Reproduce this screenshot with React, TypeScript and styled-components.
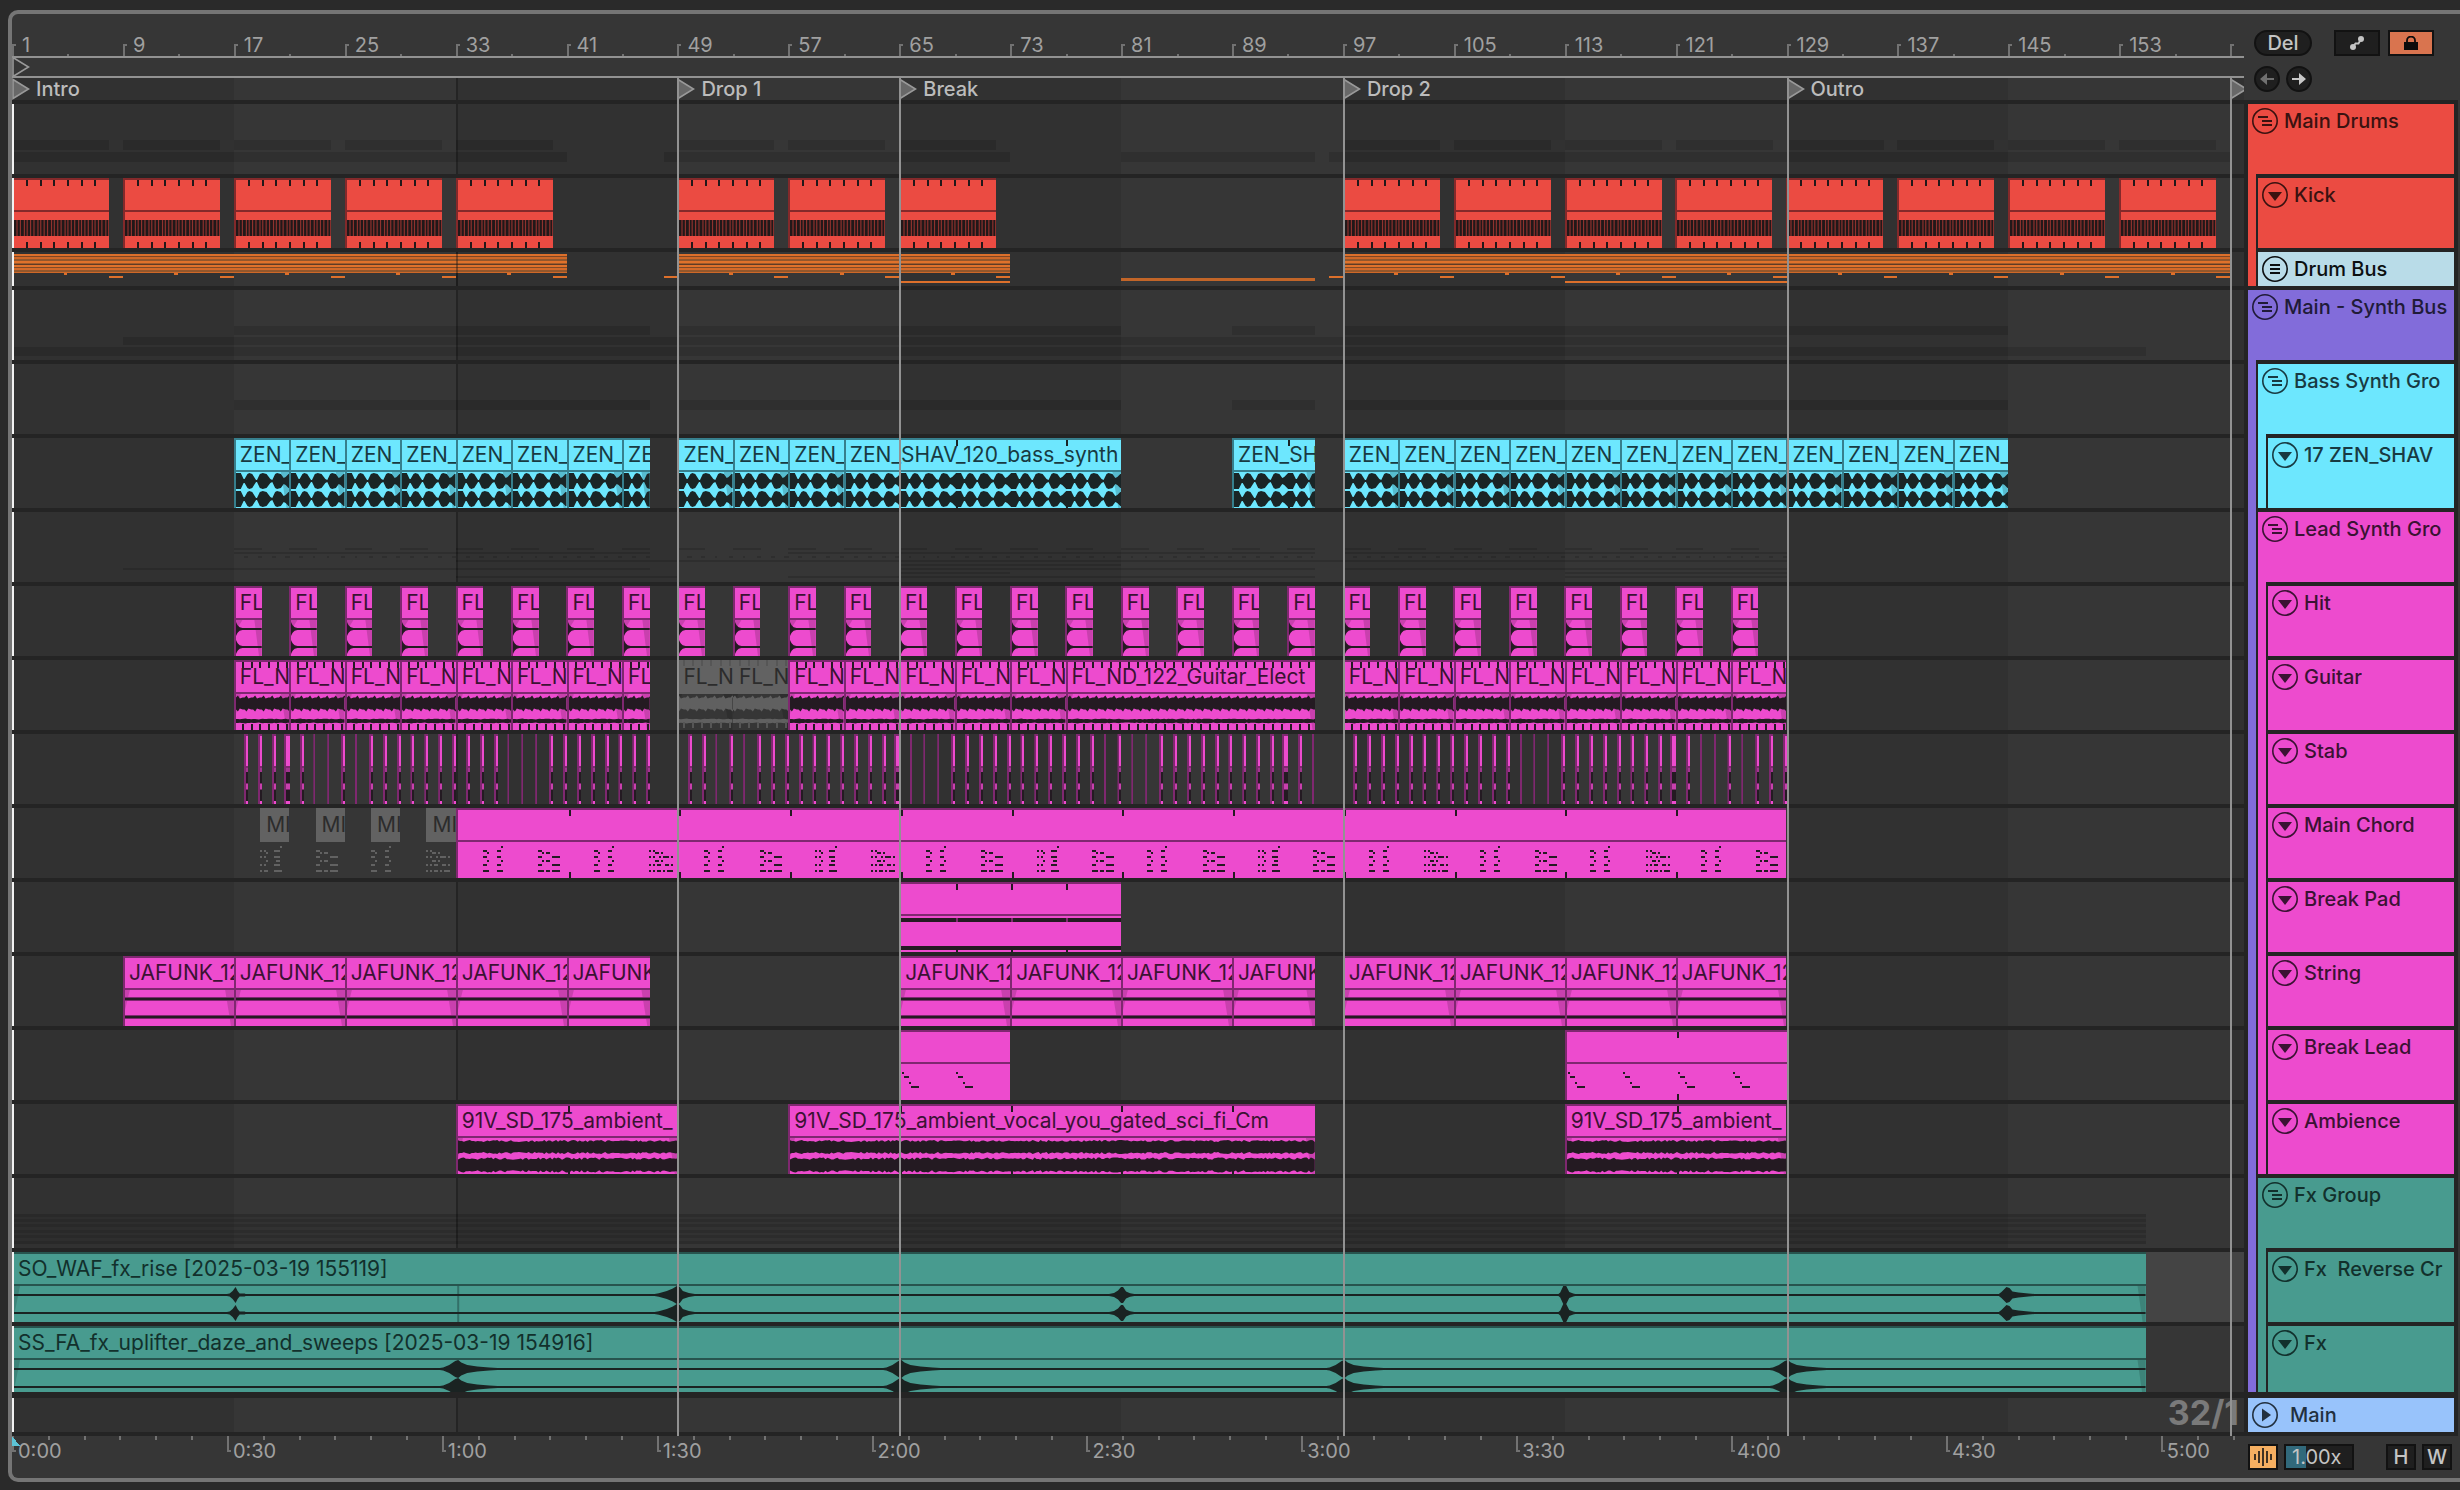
import React from "react";
import styled, { createGlobalStyle } from "styled-components";

const BARS = 161;
const pct = (bars: number) => `${(bars / BARS) * 100}%`;
const at = (bar: number) => pct(bar - 1);

type Tone = { fill: string; edge: string; ink: string; wave: string; fade: string };

const tones: Record<string, Tone> = {
  red: { fill: "#eb4b42", edge: "#84292a", ink: "#3a1210", wave: "#211819", fade: "#c83f38" },
  cyan: { fill: "#6de7fe", edge: "#367f8d", ink: "#183a42", wave: "#1a2526", fade: "#57bccf" },
  magenta: { fill: "#ed4bce", edge: "#7f2870", ink: "#3b1233", wave: "#241a22", fade: "#c940ae" },
  teal: { fill: "#489b8f", edge: "#27544e", ink: "#12302c", wave: "#1a2322", fade: "#3d8379" },
  purple: { fill: "#826cda", edge: "#463b76", ink: "#201b38", wave: "#211d30", fade: "#6c5ab4" },
  ice: { fill: "#b9dce8", edge: "#66797f", ink: "#0c0f10", wave: "#1f2526", fade: "#9bb9c3" },
  blue: { fill: "#98c3fb", edge: "#546b8a", ink: "#22303f", wave: "#1f2530", fade: "#7fa3d2" },
  muted: { fill: "#626262", edge: "#626262", ink: "#2c2c2c", wave: "#606060", fade: "#2e2e2e" },
};

/* ------------------------------ page frame ------------------------------ */

const Global = createGlobalStyle`
  *, *::before, *::after { box-sizing: border-box; }
  body { margin: 0; background: #2a2a2a; font-family: Inter, "Liberation Sans", sans-serif; font-size: 20px; line-height: 24px; }
  button, input { font: inherit; color: inherit; margin: 0; padding: 0; }
  svg { display: block; }
`;

const Page = styled.main`
  padding: 10px 0 8px 8px;
  overflow: hidden;
`;

const Panel = styled.div`
  display: grid;
  grid-template-columns: minmax(0, 1fr) 216px;
  background: #363636;
  border: 4px solid #757575;
  border-right: 0;
  border-radius: 10px 0 0 10px;
  overflow: hidden;
`;

const Arrangement = styled.section`
  min-width: 0;
`;

/* -------------------------------- rulers -------------------------------- */

const BarRuler = styled.div`
  display: flex;
  height: 44px;
  overflow: hidden;
  border-bottom: 2px solid #929292;
  color: #a0a0a0;
`;

const BarCell = styled.div`
  position: relative;
  flex: 0 0 ${pct(8)};
  padding: 19px 0 0 10px;
  &::before {
    content: "";
    position: absolute;
    left: 0;
    bottom: 0;
    width: 4px;
    height: 12px;
    border-left: 2px solid #727272;
    border-top: 2px solid #727272;
  }
  &::after {
    content: "";
    position: absolute;
    left: 50%;
    bottom: 0;
    width: 2px;
    height: 2px;
    background: #727272;
  }
`;

const LoopStrip = styled.div`
  height: 20px;
  border-bottom: 2px solid #929292;
`;

const LocatorStrip = styled.div`
  display: flex;
  height: 22px;
  overflow: hidden;
`;

const Locator = styled.div<{ $bars: number }>`
  display: flex;
  flex: 0 0 ${(p) => pct(p.$bars)};
  gap: 6px;
  align-items: center;
  line-height: 22px;
  font-weight: 500;
  color: #bcbcbc;
  svg { flex: none; }
`;

const TimeRuler = styled.div`
  display: flex;
  height: 42px;
  overflow: hidden;
  color: #a0a0a0;
`;

const TimeCell = styled.div`
  position: relative;
  flex: 0 0 ${pct(15.5)};
  padding: 3px 0 0 6px;
  svg { position: absolute; inset: 0; width: 100%; height: 20px; }
`;

/* --------------------------------- lanes -------------------------------- */

const Lanes = styled.div`
  position: relative;
  background: repeating-linear-gradient(90deg, #313131 0 ${pct(16)}, #363636 ${pct(16)} ${pct(32)});
  border-bottom: 4px solid #242424;
`;

const Lane = styled.div<{ $h?: number; $gap?: number; $selected?: boolean }>`
  position: relative;
  display: flex;
  height: ${(p) => (p.$h ?? 70) + (p.$gap ?? 4)}px;
  border-top: ${(p) => p.$gap ?? 4}px solid #242424;
  background: ${(p) => (p.$selected ? "#444444" : "transparent")};
  overflow: hidden;
  &::after {
    content: "";
    position: absolute;
    left: 0;
    top: 0;
    bottom: 0;
    width: 2px;
    background: #f2f2f2;
  }
`;

const LaneDrawing = styled.svg`
  width: 100%;
  height: 100%;
`;

const Readout = styled.output`
  margin-left: auto;
  padding-right: 5px;
  font-size: 34px;
  font-weight: 700;
  line-height: 30px;
  color: #7a7a7a;
`;

const GuideLine = styled.i<{ $dark?: boolean }>`
  position: absolute;
  top: 0;
  bottom: ${(p) => (p.$dark ? "0" : "-4px")};
  width: 2px;
  background: ${(p) => (p.$dark ? "#242424" : "#929292")};
`;

const ClipBox = styled.article<{ $tone: Tone; $muted?: boolean }>`
  position: relative;
  flex: none;
  height: 70px;
  overflow: hidden;
  border: 0 solid ${(p) => p.$tone.edge};
  border-width: ${(p) => (p.$muted ? "0" : "2px 0 0 2px")};
  background: ${(p) => (p.$muted ? "#363636" : p.$tone.fill)};
`;

const ClipTitle = styled.h3<{ $tone: Tone; $muted?: boolean }>`
  height: ${(p) => (p.$muted ? 34 : 32)}px;
  margin: 0;
  padding-left: ${(p) => (p.$muted ? 6 : 4)}px;
  overflow: hidden;
  border-bottom: 2px solid ${(p) => p.$tone.edge};
  background: ${(p) => p.$tone.fill};
  color: ${(p) => p.$tone.ink};
  font-size: 21px;
  font-weight: 400;
  line-height: ${(p) => (p.$muted ? 34 : 30)}px;
  white-space: nowrap;
`;

const ClipWave = styled.svg`
  width: 100%;
  height: 36px;
`;

const ClipTicks = styled.svg`
  position: absolute;
  inset: 0;
  width: 100%;
  height: 100%;
`;

/* ------------------------------ wave shapes ----------------------------- */

const noise = (n: number) => {
  const v = Math.sin(n * 12.9898) * 43758.5453;
  return v - Math.floor(v);
};

/* A closed shape that is mirrored around the line y = centre. */
const mirrored = (points: number[][], centre: number) => {
  const up = points.map(([x, h]) => `${x.toFixed(1)} ${(centre - h).toFixed(1)}`);
  const down = [...points].reverse().map(([x, h]) => `${x.toFixed(1)} ${(centre + h).toFixed(1)}`);
  return `M${up.join("L")}L${down.join("L")}Z`;
};

const bassEnvelope = (w: number) => {
  const shape = [[0, 8], [5, 8], [8, 2], [9, 2], [12, 7], [14, 8], [17, 7], [21, 1], [22, 1], [25, 7], [28, 8], [32, 7], [36, 2], [38, 1], [41, 7], [43, 8], [47, 7], [50, 3], [52, 4], [55, 7]];
  const out: number[][] = [];
  for (let base = 0; base < w; base += 56) shape.forEach(([x, h]) => base + x <= w && out.push([base + x, h]));
  out.push([w, 7]);
  return out;
};

const roughEnvelope = (w: number, h: number, jitter: number, seed: number) => {
  const out: number[][] = [];
  for (let x = 0; x <= w; x += 2) out.push([x, h + (noise(x + seed) - 0.4) * jitter]);
  out.push([w, h]);
  return out;
};

const toothedEnvelope = (w: number, h: number) => {
  const out: number[][] = [];
  for (let x = 0; x < w; x += 9) out.push([x, h], [x + 2, h + 2], [x + 4, h - 1], [x + 7, h]);
  out.push([w, h]);
  return out;
};

type Kind = "kick" | "bass" | "hit" | "guitar" | "pad" | "string" | "ambience" | "chord" | "lead";

type Cell = [number, number, number];
const chordShapes: Record<string, Cell[]> = {
  A: [[18, 4, 2], [0, 8, 4], [14, 8, 4], [4, 10, 2], [0, 14, 4], [14, 14, 4], [4, 18, 2], [18, 18, 2], [0, 22, 4], [14, 22, 4], [0, 28, 6], [14, 28, 6]],
  a: [[20, 4, 2], [0, 8, 2], [4, 8, 2], [14, 8, 6], [6, 10, 2], [0, 14, 2], [4, 14, 2], [14, 14, 6], [6, 18, 2], [16, 18, 4], [0, 22, 2], [4, 22, 2], [14, 22, 6], [0, 28, 2], [4, 28, 4], [14, 28, 8]],
  B: [[0, 8, 4], [4, 10, 2], [8, 10, 4], [0, 14, 4], [14, 14, 8], [4, 18, 2], [8, 18, 4], [0, 22, 4], [14, 22, 8], [0, 28, 6], [8, 28, 4], [14, 28, 8]],
  b: [[0, 8, 2], [4, 8, 2], [6, 10, 4], [12, 10, 2], [0, 14, 2], [4, 14, 2], [10, 14, 2], [14, 14, 6], [22, 14, 2], [6, 18, 4], [12, 18, 2], [0, 22, 2], [4, 22, 2], [8, 22, 4], [16, 22, 4], [22, 22, 2], [0, 28, 2], [4, 28, 2], [8, 28, 4], [14, 28, 2], [18, 28, 6]],
};

const Chord = ({ shape, x, fill }: { shape: string; x: string; fill: string }) => (
  <svg x={x} y="0" width="30" height="36" overflow="visible">
    {chordShapes[shape].map(([cx, cy, cw], i) => (
      <rect key={i} x={cx} y={cy} width={cw} height="2" fill={fill} shapeRendering="crispEdges" />
    ))}
  </svg>
);

const Fades = ({ w, fade, left = true }: { w: number; fade: string; left?: boolean }) => (
  <g fill={fade}>
    {left && <path d="M0 0H5L0 20Z" />}
    <path d={`M${w - 9} 0H${w}V36H${w - 3}Z`} />
  </g>
);

const Wave = ({ kind, len, tone, notes }: { kind: Kind; len: number; tone: Tone; notes?: string }) => {
  const w = len * 14;
  const box = { viewBox: `0 0 ${w} 36`, preserveAspectRatio: "none" as const };
  const muted = tone === tones.muted;
  if (kind === "kick")
    return (
      <ClipWave {...box}>
        <rect y="8" width={w} height="16" fill={tone.wave} />
        {Array.from({ length: len * 4 }, (_, i) => (
          <rect key={i} x={i * 3.5 + 2.5 + (i % 4 === 2 ? 0.6 : 0)} y="8" width="1.2" height="16" fill="#8f322e" />
        ))}
      </ClipWave>
    );
  if (kind === "bass")
    return (
      <ClipWave {...box}>
        <Fades w={w} fade={tone.fade} left={false} />
        <g fill={tone.wave}>
          <path d={mirrored(bassEnvelope(w), 9)} />
          <path d={mirrored(bassEnvelope(w), 27)} />
        </g>
      </ClipWave>
    );
  if (kind === "hit")
    return (
      <ClipWave {...box}>
        <path d="M0 0H7L3 6L0 14ZM20 0H28V36H25Z" fill={tone.fade} />
        <g fill={tone.wave}>
          {[9, 27].map((c) => (
            <path key={c} d={mirrored([[0, 7], [1, 5], [2, 3.5], [4, 1.8], [7, 1], [28, 1]], c)} />
          ))}
        </g>
      </ClipWave>
    );
  if (kind === "guitar")
    return (
      <ClipWave {...box}>
        <Fades w={w} fade={tone.fade} />
        <g fill={tone.wave}>
          <path d={mirrored(toothedEnvelope(w, 6), 9.5)} />
          <path d={mirrored(roughEnvelope(w, 1.9, 0.8, 3), 27)} />
        </g>
      </ClipWave>
    );
  if (kind === "pad")
    return (
      <ClipWave {...box} shapeRendering="crispEdges">
        <rect y="2" width={w} height="4" fill={tone.wave} />
        <rect y="30" width={w} height="4" fill={tone.wave} />
        {[4, 8, 12].map((b) => (
          <rect key={b} x={b * 14} y="2" width="2" height="4" fill={tone.edge} />
        ))}
      </ClipWave>
    );
  if (kind === "string")
    return (
      <ClipWave {...box}>
        <Fades w={w} fade={tone.fade} />
        <g fill={tone.edge}>
          <rect y="7" width={w} height="4" />
          <rect y="25" width={w} height="4" />
        </g>
        <g fill={tone.wave}>
          <rect y="8" width={w} height="2" />
          <rect y="26" width={w} height="2" />
        </g>
      </ClipWave>
    );
  if (kind === "ambience")
    return (
      <ClipWave {...box}>
        <Fades w={w} fade={tone.fade} />
        <g fill={tone.wave}>
          <path d={mirrored(roughEnvelope(w, 5.8, 2, 1), 9)} />
          <path d={mirrored(roughEnvelope(w, 6.2, 2.4, 7), 27)} />
        </g>
      </ClipWave>
    );
  if (kind === "chord")
    return (
      <ClipWave>
        {[...(notes ?? "")].map((shape, i) => (
          <Chord key={i} shape={shape} x={muted ? "0" : `${((1.8 + i * 4) / len) * 100}%`} fill={muted ? "#626262" : tone.wave} />
        ))}
      </ClipWave>
    );
  if (kind === "lead")
    return (
      <ClipWave shapeRendering="crispEdges">
        {Array.from({ length: len / 4 }, (_, i) => (
          <svg key={i} x={`${((i * 4) / len) * 100}%`} width="20" height="36">
            <path d="M1 8h2v2h-2zM3 12h5v2h-5zM8 18h2v2h-2zM10 22h8v2h-8z" fill={tone.wave} />
          </svg>
        ))}
      </ClipWave>
    );
  return null;
};

/* --------------------------------- clips -------------------------------- */

type ClipData = { start: number; len: number; name?: string; muted?: boolean; notes?: string; ticks?: number[] };

const Clip = ({ data, from, kind, tone: base }: { data: ClipData; from: number; kind: Kind; tone: Tone }) => {
  const tone = data.muted ? tones.muted : base;
  const marks = data.ticks ?? [];
  return (
    <ClipBox $tone={tone} $muted={data.muted} style={{ marginLeft: pct(data.start - from), width: pct(data.len) }}>
      <ClipTitle $tone={tone} $muted={data.muted}>{data.name}</ClipTitle>
      <Wave kind={kind} len={data.len} tone={tone} notes={data.notes} />
      {marks.length > 0 && (
        <ClipTicks shapeRendering="crispEdges" fill={data.muted ? "#565656" : tone.wave}>
          {marks.map((m) => (
            <React.Fragment key={m}>
              <rect x={`${(m / data.len) * 100}%`} y="0" width="2" height="6" />
              <rect x={`${(m / data.len) * 100}%`} y="62" width="2" height="6" />
            </React.Fragment>
          ))}
        </ClipTicks>
      )}
    </ClipBox>
  );
};

const ClipLane = ({ clips, kind, tone }: { clips: ClipData[]; kind: Kind; tone: Tone }) => {
  let cursor = 1;
  return (
    <Lane>
      {clips.map((c) => {
        const from = cursor;
        cursor = c.start + c.len;
        return <Clip key={c.start} data={c} from={from} kind={kind} tone={tone} />;
      })}
    </Lane>
  );
};

const series = (first: number, last: number, step: number, len: number, extra: Partial<ClipData> = {}): ClipData[] => {
  const out: ClipData[] = [];
  for (let b = first; b <= last; b += step) out.push({ start: b, len, ...extra });
  return out;
};

const every = (step: number, len: number, offset = step) => {
  const out: number[] = [];
  for (let b = offset; b < len - 0.1; b += step) out.push(b);
  return out;
};

const beatTicks = (clips: ClipData[]) => clips.map((c) => ({ ...c, ticks: every(0.654, c.len, 0.45) }));

const kickClips = [...series(1, 33, 8, 7), ...series(49, 65, 8, 7), ...series(97, 153, 8, 7)].map((c) => ({ ...c, ticks: [1, 2, 3, 4, 5, 6].map((t) => t - 0.1) }));

const zen = { name: "ZEN_" };
const bassClips: ClipData[] = [
  ...series(17, 41, 4, 4, zen),
  { start: 45, len: 2, name: "ZE" },
  ...series(49, 57, 4, 4, zen),
  { start: 61, len: 20, ticks: [8, 16], name: "ZEN_SHAV_120_bass_synth" },
  { start: 89, len: 6, ticks: [4], name: "ZEN_SH" },
  ...series(97, 141, 4, 4, zen),
];

const hit = { name: "FL" };
const hitClips = [...series(17, 45, 4, 2, hit), ...series(49, 93, 4, 2, hit), ...series(97, 125, 4, 2, hit)];

const fl = { name: "FL_N" };
const guitarClips = beatTicks([
  ...series(17, 41, 4, 4, fl),
  { start: 45, len: 2, name: "FL" },
  ...series(49, 53, 4, 4, { ...fl, muted: true }),
  ...series(57, 73, 4, 4, fl),
  { start: 77, len: 18, name: "FL_ND_122_Guitar_Elect" },
  ...series(97, 125, 4, 4, fl),
]);

const chordClips: ClipData[] = [
  ...["a", "B", "A", "b"].map((notes, i) => ({ start: 18.9 + i * 4, len: 2.1, name: "MI", muted: true, notes })),
  { start: 33, len: 96, notes: "ABAbABabABaBABaBAbABAbAB", ticks: every(8, 96) },
];

const padClips: ClipData[] = [{ start: 65, len: 16, ticks: [4, 8, 12] }];

const jf = { name: "JAFUNK_12" };
const jfShort = { name: "JAFUNK" };
const stringClips = [
  ...series(9, 33, 8, 8, jf),
  { start: 41, len: 6, ...jfShort },
  ...series(65, 81, 8, 8, jf),
  { start: 89, len: 6, ...jfShort },
  ...series(97, 121, 8, 8, jf),
];

const leadClips: ClipData[] = [{ start: 65, len: 8 }, { start: 113, len: 16, ticks: [8] }];

const ambienceClips: ClipData[] = [
  { start: 33, len: 16, ticks: [8], name: "91V_SD_175_ambient_" },
  { start: 57, len: 38, ticks: [8, 16, 24, 32], name: "91V_SD_175_ambient_vocal_you_gated_sci_fi_Cm" },
  { start: 113, len: 16, ticks: [8], name: "91V_SD_175_ambient_" },
];

/* ------------------------- drawings inside lanes ------------------------ */

const Span = ({ from, to, y, h, fill = "rgba(0,0,0,0.13)" }: { from: number; to: number; y: number; h: number; fill?: string }) => (
  <rect x={at(from)} y={y} width={pct(to - from)} height={h} fill={fill} shapeRendering="crispEdges" />
);

type Spans = [number, number][];
const Spread = ({ spans, y, h, fill }: { spans: Spans; y: number; h: number; fill?: string }) => (
  <>{spans.map(([a, b]) => <Span key={a} from={a} to={b} y={y} h={h} fill={fill} />)}</>
);

const kickSpans: Spans = kickClips.map((c) => [c.start, c.start + 7]);
const bassSpans: Spans = [[17, 47], [49, 81], [89, 95], [97, 145]];
const thin = "rgba(0,0,0,0.14)";

const DrumNotes = () => {
  const rows: [number, number, string][] = [
    [2, 2, "#dd702b"], [4, 1, "#7d4625"], [5, 2, "#cf6827"], [7, 2, "#93572c"], [9, 2, "#e0722b"], [11, 1, "#a05a2a"],
    [12, 1, "#5f3b25"], [13, 2, "#e0722b"], [15, 1, "#804a26"], [16, 2, "#d46a29"], [18, 2, "#93572c"], [20, 1, "#cf6827"],
  ];
  const dashes = [8, 16, 24, 32, 40, 48, 56, 64, 72, 96, 104, 112, 120, 128, 136, 144, 152, 160];
  const dots = [4, 12, 20, 28, 36, 52, 60, 68, 100, 108, 116, 124, 132, 140, 148, 156];
  const orange = "#dd702b";
  return (
    <LaneDrawing>
      {rows.map(([y, h, c]) => <Spread key={y} spans={[[1, 41], [49, 73], [97, 161]]} y={y} h={h} fill={c} />)}
      {dots.map((d) => <Span key={d} from={d + 0.72} to={d + 1} y={21} h={2} fill={orange} />)}
      {dashes.map((d) => <Span key={d} from={d} to={d + 1} y={24} h={2} fill={orange} />)}
      <Span from={81} to={95} y={26} h={3} fill="#c26528" />
      <Spread spans={[[65, 73], [113, 129]]} y={29} h={2} fill={orange} />
      <rect x={at(33)} width="2" height="34" fill="#141414" opacity="0.4" shapeRendering="crispEdges" />
    </LaneDrawing>
  );
};

/* n = short stab, w = wide stab, t = trimmed to its edge */
const stabRuns: [number, string][] = [
  [17, "nnnwnttntnnnnnnnnnntttnnnnnnnn"],
  [49, "nntntnnnnnnnnnnwtttnnnnnnnnnnntnttnnnnnnnnnwnt"],
  [97, "nnnnnnnnnnnntttnnnnnnnnwnttntnnn"],
];

const StabNotes = () => {
  const m = tones.magenta;
  return (
    <LaneDrawing shapeRendering="crispEdges">
      {stabRuns.flatMap(([start, run]) =>
        [...run].map((k, i) => {
          const bar = start + i + (k === "w" ? 0.6 : 0.74);
          const body = k === "w" ? 4 : 2;
          return (
            <svg key={`${start}-${i}`} x={at(bar)} width="8" height="70">
              <rect width="2" height="70" fill={m.edge} />
              {k !== "t" && (
                <>
                  <rect x="2" width={body} height="70" fill={m.edge} />
                  <rect x="2" y="2" width={body} height="30" fill={m.fill} />
                  <rect x="2" y="34" width={body} height="4" fill="#a23590" />
                  <rect x="2" y="38" width={body} height="11" fill={m.wave} />
                  <rect x="2" y="50" width={body} height="5" fill={m.fade} />
                  <rect x="2" y="56" width={body} height="11" fill={m.wave} />
                  <rect x="2" y="67" width={body} height="3" fill={m.fill} />
                </>
              )}
            </svg>
          );
        }),
      )}
    </LaneDrawing>
  );
};

const LeadOverview = () => (
  <LaneDrawing>
    <Spread spans={hitClips.map((c) => [c.start, c.start + 2])} y={36} h={2} fill={thin} />
    <Spread spans={[[17, 47], [57, 95], [97, 129]]} y={40} h={2} fill={thin} />
    {stabRuns.flatMap(([s, run]) => [...run].map((k, i) => <Span key={`${s}${i}`} from={s + i + 0.72} to={s + i + (k === "t" ? 0.86 : 1.02)} y={44} h={2} fill={thin} />))}
    <Span from={33} to={129} y={48} h={2} fill={thin} />
    <Span from={65} to={81} y={52} h={2} fill={thin} />
    <Spread spans={[[9, 47], [65, 95], [97, 129]]} y={56} h={2} fill={thin} />
    <Spread spans={[[65, 73], [113, 129]]} y={60} h={2} fill={thin} />
    <Spread spans={[[33, 49], [57, 95], [113, 129]]} y={64} h={2} fill={thin} />
  </LaneDrawing>
);

type Swell = { bar: number; points: number[][] };
const crashSwells: Swell[] = [
  { bar: 17, points: [[-14, 0], [-6, 1.5], [-3, 4], [0, 8], [2, 4], [4, 1.5], [9, 1.5], [12, 0]] },
  { bar: 49, points: [[-30, 0], [-20, 1.8], [-12, 4], [-6, 6.5], [-2, 9], [1, 8], [4, 4], [10, 2], [22, 0]] },
  { bar: 81, points: [[-18, 0], [-8, 2], [-4, 4.5], [-1, 8], [1, 8], [4, 3.5], [8, 1.8], [18, 0]] },
  { bar: 113, points: [[-8, 0], [-5, 2.5], [-2, 9], [1, 9], [4, 3], [8, 1.5], [14, 0]] },
  { bar: 145, points: [[-11, 0], [-7, 3], [-2, 8], [1, 7], [4, 3.5], [10, 2.5], [20, 1.5], [38, 0]] },
];
const tail = [[-24, 0], [-14, 1.5], [-8, 4], [-2, 8], [1, 9], [4, 6.5], [10, 4], [20, 2.5], [32, 1.5], [56, 0]];
const sweepSwells: Swell[] = [33, 65, 97, 129].map((bar) => ({ bar, points: tail }));

const FxClip = ({ name, swells, h, guide }: { name: string; swells: Swell[]; h: number; guide?: number }) => {
  const t = tones.teal;
  const len = 153.9;
  const x = (bar: number) => `${((bar - 1) / len) * 100}%`;
  return (
    <ClipBox $tone={t} style={{ width: pct(len), height: h }}>
      <ClipTitle $tone={t}>{name}</ClipTitle>
      <ClipWave>
        <path d="M0 0H6L0 30Z" fill={t.fade} />
        <svg x="100%" overflow="visible"><path d="M-8 0H0V36H-3Z" fill={t.fade} /></svg>
        {guide && <rect x={x(guide)} width="2" height="36" fill="#337068" />}
        <rect y="8" width="100%" height="2" fill={t.wave} />
        <rect y="26" width="100%" height="2" fill={t.wave} />
        {swells.map((s) => (
          <svg key={s.bar} x={x(s.bar)} overflow="visible" fill={t.wave}>
            <path d={mirrored(s.points, 9)} />
            <path d={mirrored(s.points, 27)} />
          </svg>
        ))}
      </ClipWave>
    </ClipBox>
  );
};

const locators = [
  { name: "Intro", bar: 1, bars: 48 },
  { name: "Drop 1", bar: 49, bars: 16 },
  { name: "Break", bar: 65, bars: 32 },
  { name: "Drop 2", bar: 97, bars: 32 },
  { name: "Outro", bar: 129, bars: 32 },
  { name: "", bar: 161, bars: 2 },
];

const Flag = ({ open }: { open?: boolean }) => (
  <svg width="18" height={open ? 18 : 22} viewBox={open ? "0 2 18 18" : "0 0 18 22"}>
    <path d="M1 1.500V20.500L16.500 11Z" fill={open ? "none" : "#686868"} stroke="#999999" strokeWidth="1.600" />
  </svg>
);

/* ----------------------------- track headers ---------------------------- */

const Side = styled.aside`
  min-width: 0;
`;

const Transport = styled.div`
  display: grid;
  grid-template-columns: 58px 1fr;
  align-content: start;
  gap: 10px 22px;
  height: 86px;
  padding: 16px 0 0 10px;
`;

const ToolButton = styled.button<{ $on?: boolean; $round?: boolean }>`
  display: flex;
  align-items: center;
  justify-content: center;
  height: 26px;
  border: 2px solid #121212;
  border-radius: ${(p) => (p.$round ? 13 : 0)}px;
  background: ${(p) => (p.$on ? "#d9744f" : "#1f1f1f")};
  color: #c4c4c4;
  font-weight: 500;
  line-height: 22px;
`;

const TransportTools = styled.div`
  display: flex;
  gap: 8px;
  button { flex: 0 0 46px; }
`;

const TransportRow = styled.div`
  display: flex;
  justify-content: space-between;
`;

const NavButton = styled(ToolButton)`
  width: 26px;
`;

const HeaderColumn = styled.div`
  display: flex;
  flex-direction: column;
  gap: 4px;
  padding: 4px;
  background: #242424;
  border-right: 2px solid #363636;
`;

const GroupBox = styled.section<{ $tone: Tone; $last?: boolean }>`
  background: ${(p) => p.$tone.fill};
  margin-bottom: ${(p) => (p.$last ? 2 : 0)}px;
`;

const Children = styled.div`
  display: flex;
  flex-direction: column;
  gap: 4px;
  margin-left: 8px;
  padding: 4px 0 0 2px;
  background: #242424;
`;

const Header = styled.div<{ $tone: Tone; $h: number }>`
  display: flex;
  gap: 6px;
  height: ${(p) => p.$h}px;
  padding: 4px 2px 0 4px;
  overflow: hidden;
  background: ${(p) => p.$tone.fill};
  color: ${(p) => p.$tone.ink};
`;

const HeaderIcon = styled.button`
  flex: none;
  width: 26px;
  height: 26px;
  border: 0;
  border-radius: 13px;
  background: none;
`;

const HeaderName = styled.h2<{ $indent?: boolean }>`
  margin: 0;
  padding-left: ${(p) => (p.$indent ? 6 : 0)}px;
  overflow: hidden;
  font-size: 20px;
  font-weight: 500;
  line-height: 26px;
  white-space: pre;
`;

type Glyph = "group" | "fold" | "bus" | "play";
const glyphs: Record<Glyph, React.ReactNode> = {
  group: <path d="M6 9H16M10 13H20M10 17H20" stroke="currentColor" strokeWidth="2" />,
  bus: <path d="M8 9H18M8 13H18M8 17H18" stroke="currentColor" strokeWidth="2" />,
  fold: <path d="M6 10H20L13 19Z" fill="currentColor" />,
  play: <path d="M10 6.500V19.500L19 13Z" fill="currentColor" />,
};

const Track = ({ name, tone, glyph = "fold", h = 70, indent }: { name: string; tone: string; glyph?: Glyph; h?: number; indent?: boolean }) => (
  <Header $tone={tones[tone]} $h={h}>
    <HeaderIcon type="button" aria-label={`Unfold ${name}`}>
      <svg width="26" height="26" viewBox="0 0 26 26" fill="none">
        <circle cx="13" cy="13" r="12.200" stroke="currentColor" strokeWidth="1.600" />
        {glyphs[glyph]}
      </svg>
    </HeaderIcon>
    <HeaderName $indent={indent}>{name}</HeaderName>
  </Header>
);

/* ----------------------------- footer controls -------------------------- */

const Footer = styled.div`
  display: flex;
  height: 42px;
  padding: 8px 8px 0 4px;
`;

const SquareButton = styled(ToolButton)<{ $amber?: boolean }>`
  width: 30px;
  margin-left: ${(p) => (p.$amber ? 0 : 6)}px;
  background: ${(p) => (p.$amber ? "#f6af61" : "#1f1f1f")};
`;

const ZoomInput = styled.input`
  width: 70px;
  height: 26px;
  margin: 0 26px 0 6px;
  padding-left: 6px;
  border: 2px solid #121212;
  border-radius: 0;
  background: linear-gradient(90deg, #31697b 0 20px, #1f1f1f 20px);
  color: #c4c4c4;
`;

export default function App() {
  return (
    <>
      <Global />
      <Page>
        <Panel>
          <Arrangement aria-label="Arrangement">
            <BarRuler>
              {Array.from({ length: 21 }, (_, i) => (
                <BarCell key={i}>{i < 20 ? i * 8 + 1 : ""}</BarCell>
              ))}
            </BarRuler>
            <LoopStrip><Flag open /></LoopStrip>
            <Lanes>
              <GuideLine $dark style={{ left: at(33) }} />
              <LocatorStrip>
                {locators.map((l) => (
                  <Locator key={l.bar} $bars={l.bars}><Flag />{l.name}</Locator>
                ))}
              </LocatorStrip>
              <Lane>
                <LaneDrawing>
                  <Spread spans={kickSpans} y={36} h={10} />
                  <Spread spans={[[1, 41], [48, 73], [81, 95], [96, 161]]} y={48} h={10} />
                </LaneDrawing>
              </Lane>
              <ClipLane clips={kickClips} kind="kick" tone={tones.red} />
              <Lane $h={34}><DrumNotes /></Lane>
              <Lane>
                <LaneDrawing>
                  <Spread spans={bassSpans} y={36} h={9} />
                  <Span from={9} to={129} y={47} h={8} />
                  <Span from={1} to={154.9} y={57} h={9} />
                </LaneDrawing>
              </Lane>
              <Lane><LaneDrawing><Spread spans={bassSpans} y={36} h={10} /></LaneDrawing></Lane>
              <ClipLane clips={bassClips} kind="bass" tone={tones.cyan} />
              <Lane><LeadOverview /></Lane>
              <ClipLane clips={hitClips} kind="hit" tone={tones.magenta} />
              <ClipLane clips={guitarClips} kind="guitar" tone={tones.magenta} />
              <Lane><StabNotes /></Lane>
              <ClipLane clips={chordClips} kind="chord" tone={tones.magenta} />
              <ClipLane clips={padClips} kind="pad" tone={tones.magenta} />
              <ClipLane clips={stringClips} kind="string" tone={tones.magenta} />
              <ClipLane clips={leadClips} kind="lead" tone={tones.magenta} />
              <ClipLane clips={ambienceClips} kind="ambience" tone={tones.magenta} />
              <Lane>
                <LaneDrawing>
                  <Span from={1} to={154.9} y={36} h={30} fill="rgba(0,0,0,0.06)" />
                  {[36, 41, 46, 52, 57, 63].map((y) => <Span key={y} from={1} to={154.9} y={y} h={3} fill="rgba(0,0,0,0.1)" />)}
                </LaneDrawing>
              </Lane>
              <Lane $selected><FxClip name="SO_WAF_fx_rise [2025-03-19 155119]" swells={crashSwells} h={70} guide={33} /></Lane>
              <Lane $h={66}><FxClip name="SS_FA_fx_uplifter_daze_and_sweeps [2025-03-19 154916]" swells={sweepSwells} h={66} /></Lane>
              <Lane $h={34} $gap={6}><Readout>32/1</Readout></Lane>
              {locators.slice(1).map((l) => <GuideLine key={l.bar} style={{ left: at(l.bar) }} />)}
            </Lanes>
            <TimeRuler>
              {Array.from({ length: 11 }, (_, i) => (
                <TimeCell key={i}>
                  <svg fill="#727272" shapeRendering="crispEdges">
                    <path d="M0 0H2V14H4V16H0Z" />
                    {[1, 2, 3, 4, 5].map((s) => <rect key={s} x={`${(s / 6) * 100}%`} width="2" height="4" />)}
                    {i === 0 && <path d="M0 0L8 10H0Z" fill="#5cc3d6" />}
                  </svg>
                  {`${Math.floor(i / 2)}:${i % 2 ? "30" : "00"}`}
                </TimeCell>
              ))}
            </TimeRuler>
          </Arrangement>

          <Side aria-label="Tracks">
            <Transport>
              <ToolButton type="button" $round>Del</ToolButton>
              <TransportTools>
                <ToolButton type="button" aria-label="Automation mode">
                  <svg width="16" height="16" viewBox="0 0 16 16" fill="#c4c4c4" stroke="#c4c4c4">
                    <path d="M4 12L6.500 8.500H9.500L12 4" fill="none" strokeWidth="1.800" />
                    <circle cx="4" cy="12" r="3" stroke="none" /><circle cx="12" cy="4" r="3" stroke="none" />
                  </svg>
                </ToolButton>
                <ToolButton type="button" $on aria-label="Lock envelopes">
                  <svg width="14" height="14" viewBox="0 0 14 14">
                    <path d="M3 7V4.500a4 4 0 0 1 8 0V7" fill="none" stroke="#0c0c0c" strokeWidth="1.800" />
                    <rect y="6" width="14" height="8" fill="#0c0c0c" />
                  </svg>
                </ToolButton>
              </TransportTools>
              <TransportRow>
                <NavButton type="button" $round aria-label="Previous locator">
                  <svg width="14" height="12" viewBox="0 0 14 12" fill="#707070"><path d="M0 6L7 0V5H14V7H7V12Z" /></svg>
                </NavButton>
                <NavButton type="button" $round aria-label="Next locator">
                  <svg width="14" height="12" viewBox="0 0 14 12" fill="#c8c8c8"><path d="M14 6L7 0V5H0V7H7V12Z" /></svg>
                </NavButton>
              </TransportRow>
            </Transport>
            <HeaderColumn>
              <GroupBox $tone={tones.red}>
                <Track name="Main Drums" tone="red" glyph="group" />
                <Children>
                  <Track name="Kick" tone="red" />
                  <Track name="Drum Bus" tone="ice" glyph="bus" h={34} />
                </Children>
              </GroupBox>
              <GroupBox $tone={tones.purple} $last>
                <Track name="Main - Synth Bus" tone="purple" glyph="group" />
                <Children>
                  <GroupBox $tone={tones.cyan}>
                    <Track name="Bass Synth Gro" tone="cyan" glyph="group" />
                    <Children><Track name="17 ZEN_SHAV" tone="cyan" /></Children>
                  </GroupBox>
                  <GroupBox $tone={tones.magenta}>
                    <Track name="Lead Synth Gro" tone="magenta" glyph="group" />
                    <Children>
                      {["Hit", "Guitar", "Stab", "Main Chord", "Break Pad", "String", "Break Lead", "Ambience"].map((n) => (
                        <Track key={n} name={n} tone="magenta" />
                      ))}
                    </Children>
                  </GroupBox>
                  <GroupBox $tone={tones.teal}>
                    <Track name="Fx Group" tone="teal" glyph="group" />
                    <Children>
                      <Track name="Fx  Reverse Cr" tone="teal" />
                      <Track name="Fx" tone="teal" h={66} />
                    </Children>
                  </GroupBox>
                </Children>
              </GroupBox>
              <Track name="Main" tone="blue" glyph="play" h={34} indent />
            </HeaderColumn>
            <Footer>
              <SquareButton type="button" $amber aria-label="Waveform zoom">
                <svg width="22" height="20" viewBox="0 0 22 20" stroke="#141414" strokeWidth="1.600">
                  <path d="M3 7V13M7 4V16M11 1V19M15 4V16M19 7V13" />
                </svg>
              </SquareButton>
              <ZoomInput aria-label="Waveform vertical zoom" defaultValue="1.00x" />
              <SquareButton type="button">H</SquareButton>
              <SquareButton type="button">W</SquareButton>
            </Footer>
          </Side>
        </Panel>
      </Page>
    </>
  );
}
